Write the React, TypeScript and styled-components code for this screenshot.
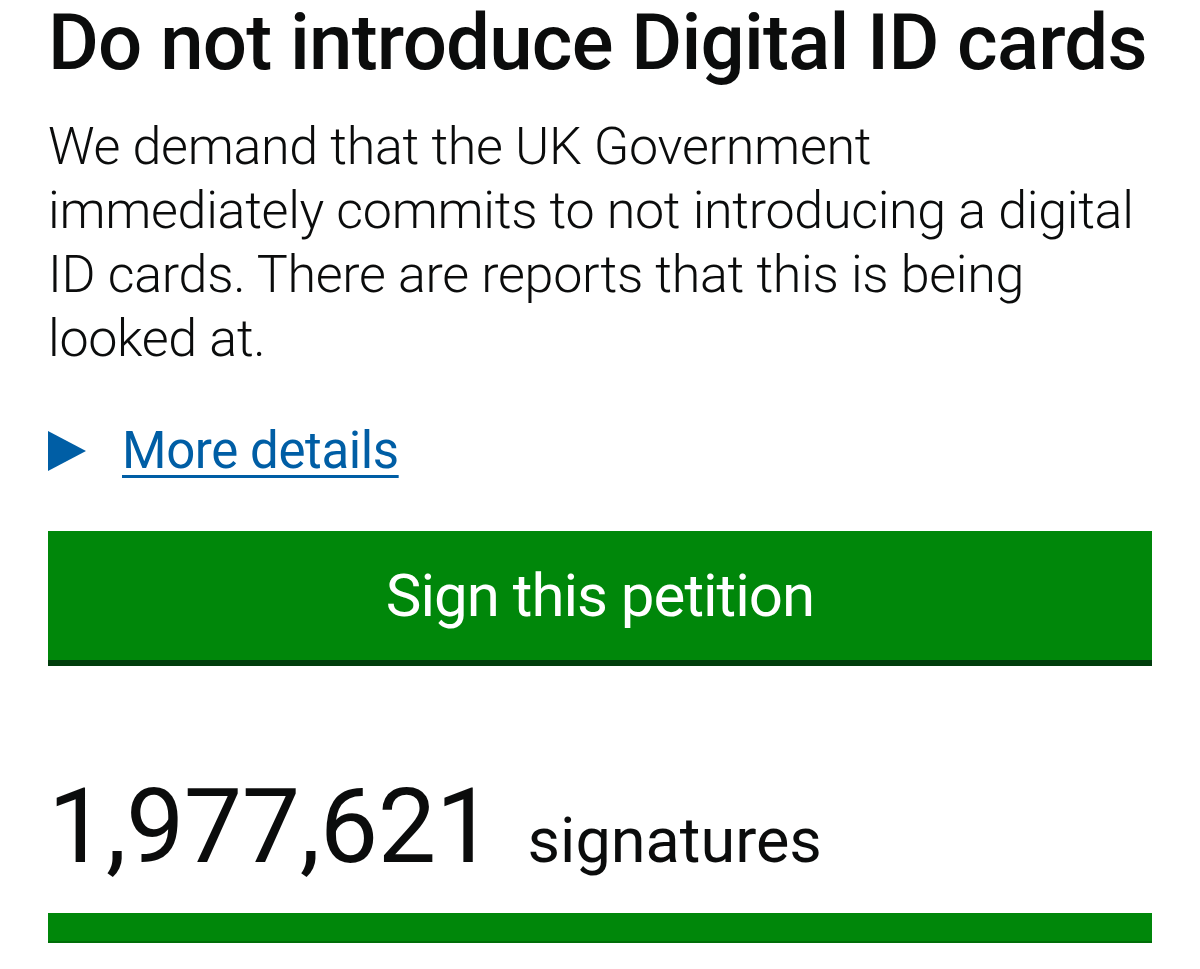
import React from 'react';
import styled, { createGlobalStyle } from 'styled-components';

const GlobalStyle = createGlobalStyle`
  html, body {
    margin: 0;
    padding: 0;
    background: #ffffff;
  }

  body {
    font-family: Roboto, 'Noto Sans', Arial, sans-serif;
    color: #0b0c0c;
  }
`;

const Page = styled.main`
  padding: 0 48px;
`;

const Title = styled.h1`
  margin: 0;
  font-size: 78px;
  font-weight: 500;
  line-height: 86px;
  letter-spacing: -0.8px;
  white-space: nowrap;
`;

const Summary = styled.p`
  margin: 29px 0 0;
  font-size: 52px;
  font-weight: 300;
  line-height: 64px;
  letter-spacing: -0.3px;
`;

const Details = styled.div`
  display: flex;
  align-items: center;
  gap: 36px;
  margin-top: 48px;
  font-size: 51px;
  line-height: 64px;
`;

const Arrow = styled.span`
  display: block;
  width: 0;
  height: 0;
  border-top: 20.5px solid transparent;
  border-bottom: 20.5px solid transparent;
  border-left: 38px solid #005ea5;
`;

const DetailsLink = styled.a`
  color: #005ea5;
  text-decoration: underline;
  text-decoration-thickness: 3px;
  text-underline-offset: 7px;
  letter-spacing: -0.4px;
`;

const SignButton = styled.a`
  display: flex;
  align-items: center;
  justify-content: center;
  margin-top: 48px;
  height: 129px;
  background: #00870a;
  border-bottom: 6px solid #003d0c;
  color: #ffffff;
  font-size: 60px;
  font-weight: 400;
  letter-spacing: -1px;
  text-decoration: none;
`;

const Count = styled.p`
  display: flex;
  align-items: baseline;
  gap: 34px;
  margin: 99px 0 0;
  line-height: 1.2;
`;

const Number = styled.span`
  font-size: 104px;
  font-weight: 400;
  letter-spacing: -0.5px;
`;

const Label = styled.span`
  font-size: 63px;
  font-weight: 400;
`;

const Progress = styled.div`
  margin-top: 23px;
  height: 30px;
  background: #e6e6e6;
`;

const ProgressFill = styled.div`
  height: 100%;
  background: #00870a;
  box-shadow: inset 0 -2px 0 #006e08;
`;

const App = () => {
  const signatures = 1977621;
  const target = 1977621;

  return (
    <>
      <GlobalStyle />
      <Page>
        <Title>Do not introduce Digital ID cards</Title>
        <Summary>
          We demand that the UK Government immediately commits to not introducing a digital
          ID cards. There are reports that this is being looked at.
        </Summary>

        <Details>
          <Arrow />
          <DetailsLink href='#'>More details</DetailsLink>
        </Details>

        <SignButton href='#'>Sign this petition</SignButton>

        <Count>
          <Number>{signatures.toLocaleString('en-GB')}</Number>
          <Label>signatures</Label>
        </Count>

        <Progress>
          <ProgressFill style={{ width: `${Math.min(100, (signatures / target) * 100)}%` }} />
        </Progress>
      </Page>
    </>
  );
};

export default App;
